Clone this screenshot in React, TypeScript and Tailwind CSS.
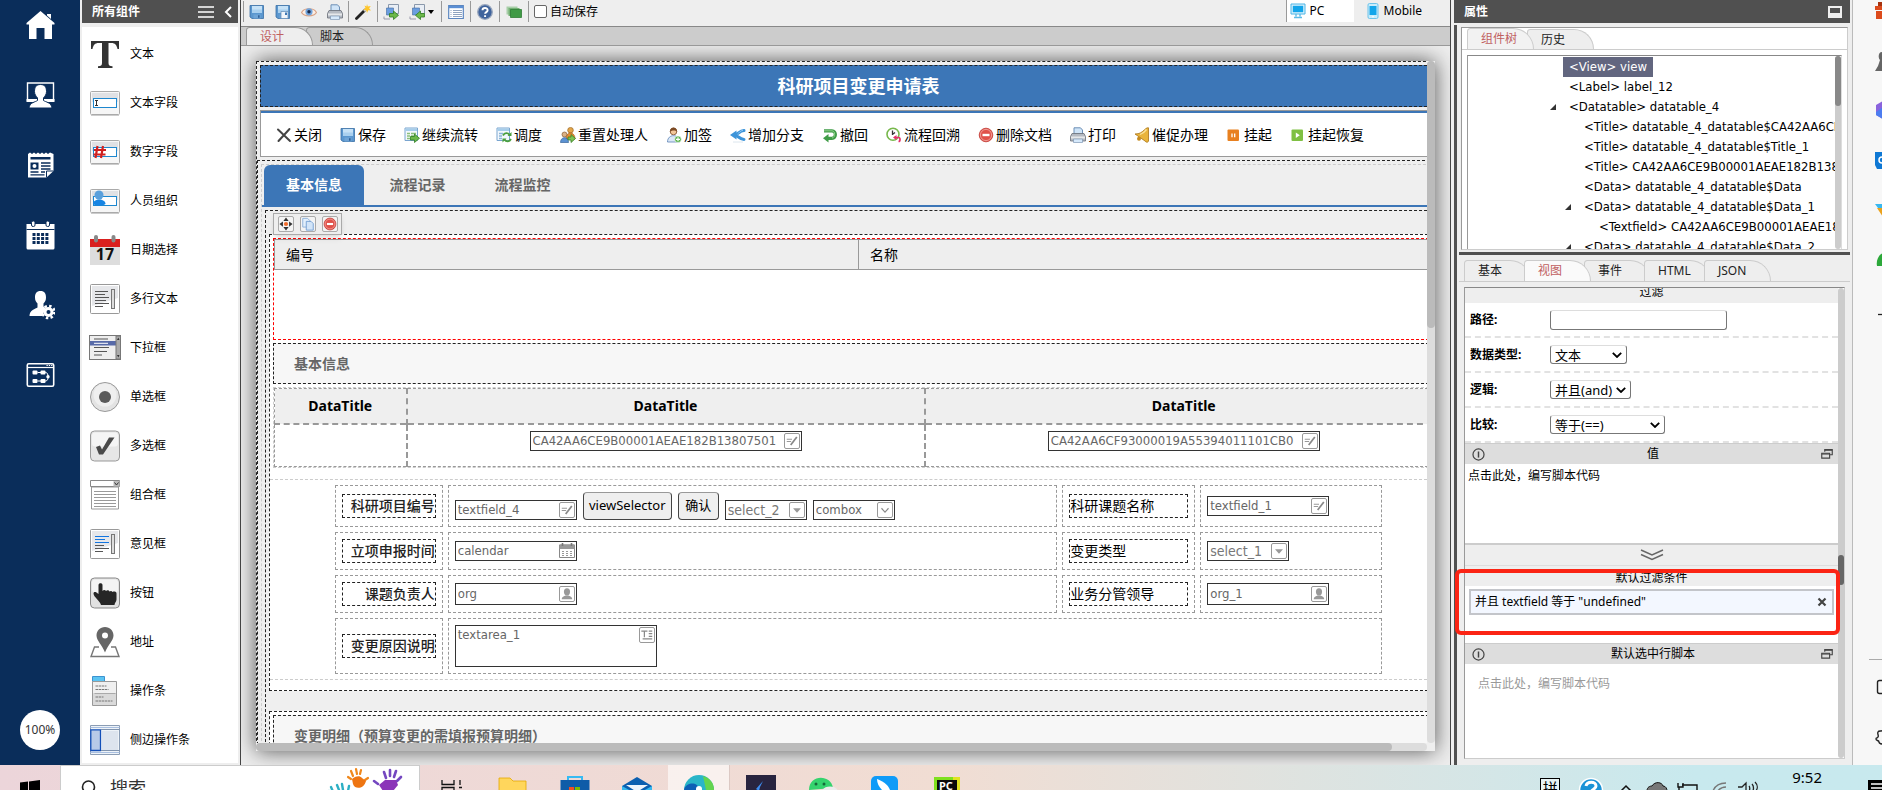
import { useState, type ReactNode } from 'react'

const FONT = "font-['Noto_Sans','Noto_Sans_CJK_SC',sans-serif]"

type IconName = string

/* ── Iconos pequeños 16x16 ── */
function Icon({ name, className = 'size-4 shrink-0' }: { name: IconName; className?: string }) {
  return <svg viewBox="0 0 16 16" className={className} aria-hidden="true">{GLYPHS[name]}</svg>
}

const PRINTER = (
  <>
    <path d="M4 7V.8h6.5L12.500 3v4z" fill="#cfe4f8" stroke="#6d8fb5" />
    <path d="M2 6.500h12l1.500 3v4.500h-15V9.500z" fill="#b5bac2" stroke="#6b7078" strokeWidth=".8" />
    <path d="M1 9.500h14v2H1z" fill="#e6e8ea" />
    <path d="M3.500 12h9v3.500h-9z" fill="#d6e9fb" stroke="#7f98b4" strokeWidth=".7" />
  </>
)

const FLOPPY = (
  <>
    <path d="M1 1.500h13.500v13H3L1 13z" fill="#5b97cf" stroke="#3a6ea5" strokeWidth=".8" />
    <path d="M3 2h10v7H3z" fill="#a9d0ef" />
    <path d="M3 2h10v3.500H3z" fill="#c6e2f7" />
    <path d="M4.500 10.500h7v4h-7z" fill="#6fa4d6" />
    <path d="M9 11.200h1.600v2.600H9z" fill="#2f6199" />
  </>
)

const RED_MINUS = (
  <>
    <circle cx="8" cy="8" r="6.800" fill="#e0524a" stroke="#c23a33" strokeWidth=".8" />
    <circle cx="8" cy="8" r="5.600" fill="none" stroke="#f2a19b" strokeWidth=".9" />
    <path d="M4.500 6.800h7v2.400h-7z" fill="#fff" />
  </>
)

const GREEN_ARROW = <path d="M6.500 9.500h4V7l5 4.300-5 4.200V13h-4z" fill="#6cb84a" stroke="#2f7d22" strokeWidth=".8" />

const GLYPHS: Record<string, ReactNode> = {
  floppy: FLOPPY,
  floppyAs: (
    <>
      {FLOPPY}
      <path d="M6 7.500h7v7H6z" fill="#f1f6fb" stroke="#5d88b5" strokeWidth=".7" />
      <path d="M10 8.500h2V11h-2z" fill="#3f78b4" />
    </>
  ),
  eye: (
    <>
      <path d="M.5 8.500C3 3.500 13 3.500 15.500 8.500 13 13 3 13 .5 8.500z" fill="#fdeee4" stroke="#d9a488" strokeWidth="1.200" />
      <circle cx="8" cy="7.800" r="3.600" fill="#6fa3dc" />
      <circle cx="8" cy="7.800" r="1.700" fill="#1c2b4b" />
    </>
  ),
  printer: PRINTER,
  wand: (
    <>
      <path d="M1.500 14.500L10 6" stroke="#222" strokeWidth="2.800" strokeLinecap="round" />
      <path d="M9 7l2-2" stroke="#ccc" strokeWidth="2.600" />
      <path d="M12 0l.8 2.600L15.800 2l-1.700 2.200L16 6.500l-2.800-.3L12 9l-.7-2.800L8.500 6 10.500 4 9.500 1.500l2 1z" fill="#ffc629" />
    </>
  ),
  exportDoc: (
    <>
      <path d="M5.500.5h10v9h-10z" fill="#e9eef5" stroke="#8a98ab" />
      <path d="M3.500 4h7v7h-7z" fill="#6a9ee0" stroke="#44699e" strokeWidth=".6" />
      <path d="M1 12.500V15h6" fill="none" stroke="#99a" />
      {GREEN_ARROW}
    </>
  ),
  importDoc: (
    <>
      <path d="M5.500.5h10v9h-10z" fill="#e9eef5" stroke="#8a98ab" />
      <path d="M3.500 4h7v7h-7z" fill="#6a9ee0" stroke="#44699e" strokeWidth=".6" />
      <path d="M1 12.500V15h6" fill="none" stroke="#99a" />
      <path d="M15.500 9.500h-4V7l-5 4.300 5 4.200V13h4z" fill="#6cb84a" stroke="#2f7d22" strokeWidth=".8" />
    </>
  ),
  list: (
    <>
      <path d="M.7 1.500h14.600v13H.7z" fill="#fff" stroke="#5b86c0" strokeWidth="1.200" />
      <path d="M1 2h14v2.200H1z" fill="#5b8fd4" />
      <path d="M5 6.500h9M5 8.500h9M5 10.500h9M5 12.500h9M2.500 6.500h1M2.500 8.500h1M2.500 10.500h1M2.500 12.500h1" stroke="#8fa3bf" />
    </>
  ),
  help: (
    <>
      <circle cx="8" cy="8" r="7.300" fill="#3f639c" stroke="#9aa7bd" strokeWidth="1.300" />
      <path d="M5.500 6.300C5.500 3.300 10.600 3.300 10.600 6.200c0 1.900-2.500 1.900-2.500 3.600M8.100 11.200v1.800" fill="none" stroke="#fff" strokeWidth="1.900" />
    </>
  ),
  greenWin: (
    <>
      <path d="M.5 2.500h11v8H.5z" fill="#a8cfa8" />
      <path d="M2.500 4h11v8h-11z" fill="#74b074" />
      <path d="M4.500 5.500h11v8h-11z" fill="#3f9a45" stroke="#2f7d35" strokeWidth=".8" />
    </>
  ),
  pc: (
    <>
      <path d="M1 1h14v10H1z" fill="#d8f1fc" stroke="#4ab4e6" strokeWidth="1" />
      <path d="M2.800 2.800h10.400v6.400H2.800z" fill="#12a5ea" />
      <path d="M6 11v2.500M10 11v2.500M4 14.500h8" stroke="#5cbbe8" strokeWidth="1.400" />
    </>
  ),
  mobile: (
    <>
      <rect x="3" y=".5" width="10" height="15" rx="1.500" fill="#c9ecfb" stroke="#6cc3ea" />
      <path d="M4.500 3h7v9h-7z" fill="#12a5ea" />
      <circle cx="8" cy="13.700" r=".8" fill="#fff" />
    </>
  ),
  close: <path d="M2 2.500L14 14M13.500 2L2.500 14" stroke="#444" strokeWidth="2" strokeLinecap="round" />,
  flow: (
    <>
      <path d="M1 1h12.500v12.500H1z" fill="#f3f8fd" stroke="#7aa5cf" />
      <path d="M1.500 1.500h11.500v2.500H1.500z" fill="#a7cdea" />
      <path d="M3 6.500h3M7 6.500h5M3 9h3M7 9h3M3 11.500h3" stroke="#8cc07a" strokeWidth="1.300" />
      {GREEN_ARROW}
    </>
  ),
  dispatch: (
    <>
      <path d="M1 1h12.500v12.500H1z" fill="#f3f8fd" stroke="#7aa5cf" />
      <path d="M1.500 1.500h11.500v2.500H1.500z" fill="#a7cdea" />
      <path d="M3 6.500h4M3 9h3M3 11.500h3" stroke="#8cb4d8" strokeWidth="1.300" />
      <path d="M7 8.500c1.500-3 5-3 6.500-.5M15 12c-1.500 3-5 3-6.500.5" fill="none" stroke="#4a9f3e" strokeWidth="1.800" />
      <path d="M15.500 5v4h-4zM6.500 15.500v-4h4z" fill="#4a9f3e" />
    </>
  ),
  users: (
    <>
      <circle cx="10.500" cy="3.200" r="2.800" fill="#e3a54a" stroke="#9c6a25" strokeWidth=".7" />
      <path d="M6 12c0-8 9-8 9 0z" fill="#e98d2e" stroke="#a35f17" strokeWidth=".7" />
      <circle cx="4.500" cy="7.500" r="2.500" fill="#dcb184" stroke="#86592f" strokeWidth=".7" />
      <path d="M.5 15.500c0-6.500 8-6.500 8 0z" fill="#5b92d2" stroke="#38659b" strokeWidth=".7" />
      <path d="M8 10h3V7.500l4.500 4-4.500 4V13H8z" fill="#7cc253" stroke="#3a8228" strokeWidth=".8" />
    </>
  ),
  userAdd: (
    <>
      <circle cx="7.500" cy="4.500" r="3.300" fill="#f3c79a" stroke="#7c4a24" strokeWidth=".8" />
      <path d="M4 5c-.5-6 7.500-6 7 0-1.500-1.800-4.500-2-7 0z" fill="#7c4a24" />
      <path d="M1.500 15c0-8.500 12-8.500 12 0z" fill="#dbe8f7" stroke="#5a81b4" strokeWidth=".8" />
      <circle cx="12" cy="12.300" r="3.300" fill="#57b04a" stroke="#fff" strokeWidth=".6" />
      <path d="M12 10.300v4M10 12.300h4" stroke="#fff" strokeWidth="1.200" />
    </>
  ),
  branch: (
    <>
      <path d="M14 3.500C9 3.800 8 8 4 8c4 0 5 4.200 10 4.500" fill="none" stroke="#3d94d9" strokeWidth="3" strokeLinecap="round" />
      <path d="M0 8l6.500-4.500v9z" fill="#3d94d9" />
      <path d="M13 3.300C10 3.800 9 6 7.500 7.200" fill="none" stroke="#8cc6f2" />
      <path d="M3 15h10" stroke="#dce6ee" />
    </>
  ),
  undo: (
    <>
      <path d="M2 3.800h8c4.500 0 4.500 7.500 0 7.500H6" fill="none" stroke="#3f9c47" strokeWidth="3.200" />
      <path d="M2 3.800h8c3.500 0 3.500 7 0 7.200" fill="none" stroke="#8fd08a" strokeWidth="1" />
      <path d="M6.500 7v8.500L1 11.300z" fill="#3f9c47" />
    </>
  ),
  history: (
    <>
      <circle cx="7" cy="7.300" r="6" fill="#fff" stroke="#77b84c" strokeWidth="1.600" />
      <path d="M6.500 3.500v4.500M7 7l2-1.500" fill="none" stroke="#333" strokeWidth="1.300" />
      <path d="M8 10.500h4.500c2 0 2 4 0 4" fill="none" stroke="#e5316b" strokeWidth="1.700" />
      <path d="M7 10.500l3.500-2.500v5z" fill="#e5316b" />
    </>
  ),
  remove: RED_MINUS,
  bell: (
    <>
      <path d="M14.500.8v13.500c-1 1.500-2.500 1-3.500-.3L1 7c3-.2 5-.5 7.500-2.500S12.500.3 14.500.8z" fill="#e9b43c" stroke="#a97417" strokeWidth=".8" />
      <path d="M12.500 2.500c-1.500 2-4 4.200-6.500 5" fill="none" stroke="#fbe29a" strokeWidth="1.300" />
      <circle cx="5" cy="11.800" r="2" fill="#c58a1e" />
    </>
  ),
  pause: (
    <>
      <rect x="1.500" y="2.500" width="11.500" height="11.500" rx="1" fill="#e8801f" />
      <path d="M6 6.500v3.700M8.700 6.500v3.700" stroke="#fff" strokeWidth="1.300" />
    </>
  ),
  play: (
    <>
      <rect x="1.500" y="2.500" width="11.500" height="11.500" rx="1" fill="#7fc043" />
      <path d="M5.800 5.500l4 2.700-4 2.800z" fill="#fff" />
    </>
  ),
  move: (
    <>
      <circle cx="8" cy="8" r="2.400" fill="#f26c2a" />
      <path d="M8 .5l3 4H5zM8 15.500l3-4H5zM.5 8l4-3v6zM15.500 8l-4-3v6z" fill="#333" />
    </>
  ),
  copy: (
    <>
      <path d="M2 1.500h5.500L10 4v7.500H2z" fill="#e3effb" stroke="#86acd8" />
      <path d="M6 5h5.500L14 7.500V15H6z" fill="#d3e5f8" stroke="#6f9bd0" />
    </>
  ),
  edit: (
    <>
      <path d="M2 6h6M2 8.500h5" stroke="#999" strokeWidth="1.200" />
      <path d="M6.500 12.500l7-9" stroke="#888" strokeWidth="2" />
    </>
  ),
  down: <path d="M3.500 6h9L8 11z" fill="#999" />,
  chevron: <path d="M4 6l4 4.500L12 6" fill="none" stroke="#888" strokeWidth="1.300" />,
  person: (
    <>
      <ellipse cx="8" cy="5.500" rx="3.500" ry="4.200" fill="#999" />
      <path d="M2 14c0-3 3-3.500 4.300-4.300h3.400c1.300.8 4.300 1.300 4.300 4.300z" fill="#999" />
    </>
  ),
  textarea: <path d="M1.500 3.500h7M5 3.500v7M10 3.500h4M10 6.500h4M10 9.500h4M3 12.500h11" stroke="#888" strokeWidth="1.400" />,
  date: (
    <>
      <path d="M.5 2h15v12.500h-15z" fill="#fff" stroke="#888" />
      <path d="M.5 1.500h15v4.500h-15z" fill="#999" />
      <path d="M3.500 0v3M12.500 0v3" stroke="#777" strokeWidth="1.600" />
      <path d="M3 8.500h10M3 10.500h10M3 12.500h10" stroke="#999" strokeDasharray="2 2" />
    </>
  ),
  info: (
    <>
      <circle cx="8" cy="8" r="6.800" fill="none" stroke="#444" strokeWidth="1.500" />
      <path d="M8 4.300v7.500" stroke="#444" strokeWidth="1.800" />
    </>
  ),
  restore: (
    <>
      <path d="M5 5V2h10v7h-3" fill="none" stroke="#444" strokeWidth="1.500" />
      <path d="M5 3h10" stroke="#444" strokeWidth="1.500" />
      <path d="M1 7h10.500v6.500H1z" fill="none" stroke="#444" strokeWidth="1.500" />
      <path d="M1 8h10.500" stroke="#444" strokeWidth="1.500" />
    </>
  ),
}

/* ── Barra lateral azul ── */
const RAIL: { label: string; art: ReactNode }[] = [
  {
    label: '首页',
    art: (
      <>
        <path d="M14 0L28 12v1.500h-2.500V28H18V17h-8v11H2.500V13.500H0V12z" fill="#fff" />
        <path d="M20.500 3h4v5l-4-3.500z" fill="#fff" />
      </>
    ),
  },
  {
    label: '门户',
    art: (
      <>
        <path d="M1 2h26v17.500H1z" fill="none" stroke="#fff" strokeWidth="1.400" />
        <path d="M0 18h28v3H0z" fill="#fff" />
        <path d="M14 3.500c4.500 0 6 3 6 7 0 3-1.500 4.500-3 6.500v2.500c2 1.500 8 2 8.500 7.500h-23C3 21.500 9 21 11 19.500V17c-1.500-2-3-3.500-3-6.500 0-4 1.500-7 6-7z" fill="#fff" stroke="#0a2d5a" strokeWidth="1" />
      </>
    ),
  },
  {
    label: '内容',
    art: (
      <>
        <path d="M1.500 3l2-1.500 2 1.500 2-1.500 2 1.500 2-1.500 2 1.500 2-1.500 2 1.500 2-1.500 2 1.500 2-1.500L27 3v17l-7 6.500H1.500z" fill="#fff" />
        <path d="M4 6h20v2.500H4z" fill="#0a2d5a" />
        <path d="M4 11.500h8v7H4z" fill="#0a2d5a" />
        <circle cx="8" cy="15" r="2" fill="#fff" />
        <path d="M14.500 12h9.500M14.500 15h9.500M14.500 18h9.500M4 21h8M14.500 21h4M4 23.800h14" stroke="#0a2d5a" strokeWidth="1.300" />
        <path d="M20 26.500V20h7" fill="none" stroke="#0a2d5a" />
      </>
    ),
  },
  {
    label: '日程',
    art: (
      <>
        <path d="M0 3h28v24a1.500 1.500 0 01-1.500 1.500h-25A1.500 1.500 0 010 27z" fill="#fff" />
        <path d="M0 8.500h28" stroke="#0a2d5a" />
        <rect x="5" y="0" width="3.500" height="5.500" rx="1.500" fill="#fff" stroke="#0a2d5a" />
        <rect x="19.500" y="0" width="3.500" height="5.500" rx="1.500" fill="#fff" stroke="#0a2d5a" />
        <path d="M6 13.500h17M6 17.500h17M6 21.500h17" stroke="#0a2d5a" strokeWidth="2.800" strokeDasharray="3 1.300" />
      </>
    ),
  },
  {
    label: '组织',
    art: (
      <>
        <path d="M14 0c4 0 5.500 2.500 5.500 6.500 0 3-1 4.500-2.500 6v3l2 1.500-3 8H3c0-6 6-7 8-8.500v-4c-1.500-1.500-2.500-3-2.500-6C8.500 2.500 10 0 14 0z" fill="#fff" />
        <circle cx="22" cy="21" r="5" fill="#fff" />
        <circle cx="22" cy="21" r="6" fill="none" stroke="#fff" strokeWidth="2.600" strokeDasharray="2.400 2.300" />
        <circle cx="22" cy="21" r="2" fill="#0a2d5a" />
      </>
    ),
  },
  {
    label: '流程',
    art: (
      <>
        <rect x=".8" y="2.800" width="26.400" height="22.400" rx="1.500" fill="none" stroke="#fff" strokeWidth="1.600" />
        <path d="M1 6.500h26" stroke="#fff" strokeWidth="1.200" />
        <path d="M20 4.500h6" stroke="#fff" strokeWidth="1.200" strokeDasharray="1.300 1" />
        <rect x="6" y="9.500" width="5" height="4" rx="1" fill="#fff" />
        <rect x="14" y="9.500" width="5" height="4" rx="1" fill="#fff" />
        <rect x="6" y="18" width="5" height="4" rx="1" fill="#fff" />
        <rect x="14" y="18" width="5" height="4" rx="1" fill="#fff" />
        <circle cx="21.500" cy="15.800" r="1.700" fill="#fff" />
        <path d="M11 11.500h8c2 0 2.500 2 2.500 4M11 20h8c2 0 2.500-2 2.500-4" fill="none" stroke="#fff" />
      </>
    ),
  },
]

/* ── Paleta de componentes ── */
const BOX = (
  <>
    <rect x=".5" y="3.500" width="29" height="23" rx="1" fill="#f6f6f6" stroke="#aaa" />
    <path d="M2 5h26v9H2z" fill="#e0e1e4" />
    <rect x="3.500" y="10.500" width="23" height="9" fill="#fff" stroke="#1d87cf" />
    <path d="M1 27.500h28" stroke="#ccc" />
  </>
)
const PAGE = (
  <>
    <rect x=".5" y=".5" width="29" height="29" rx="1" fill="#fff" stroke="#999" />
    <path d="M2 2h26v12L2 22z" fill="#e6e7ea" />
    <rect x="21.500" y="5.500" width="3" height="19" fill="#ddd" stroke="#777" />
  </>
)

const PALETTE: { label: string; art: ReactNode }[] = [
  { label: '文本', art: <path d="M1 2h28v8h-1.500c-.8-4-2.500-6-6-6H18.500v20c0 2.500 1 3 4 3.300V29H8v-1.700c3-.3 4-.8 4-3.300V4H8.500c-3.500 0-5.200 2-6 6H1z" fill="#333" /> },
  { label: '文本字段', art: <>{BOX}<path d="M5 12.500h3M6.500 12.500v5M5 17.500h3" stroke="#333" /></> },
  { label: '数字字段', art: <>{BOX}<path d="M7.500 9L5.500 21M13 9l-2 12M4 13h12M3.500 17.500h12" stroke="#cf2020" strokeWidth="2.200" /></> },
  {
    label: '人员组织',
    art: <>{BOX}<circle cx="9" cy="9" r="4.500" fill="#5aa0dc" /><path d="M3 18c0-6 12.500-6 12.500 0-3 2-9.500 2-12.500 0z" fill="#1785e3" /></>,
  },
  {
    label: '日期选择',
    art: (
      <>
        <path d="M0 4h30v26H0z" fill="#ddd" />
        <path d="M0 4h30v8H0z" fill="#d9201f" />
        <rect x="4" y="0" width="4" height="7.500" rx="2" fill="#888" />
        <rect x="21.500" y="0" width="4" height="7.500" rx="2" fill="#888" />
        <text x="15" y="25" textAnchor="middle" className="text-[16px] font-bold" fill="#111">17</text>
      </>
    ),
  },
  { label: '多行文本', art: <>{PAGE}<path d="M5 7.500h13M5 10.500h10M5 13.500h14M5 16.500h11M5 19.500h14M5 22.500h8" stroke="#555" /></> },
  {
    label: '下拉框',
    art: (
      <>
        <rect x="-.5" y="2.500" width="31" height="24" fill="#eee" stroke="#777" />
        <path d="M0 8h26v4.500H0z" fill="#5669a8" />
        <path d="M26 3h4.500v23H26z" fill="#aaa" stroke="#777" />
        <path d="M4 6h14M4 14.500h15M4 18.500h13M4 22h8" stroke="#555" />
        <path d="M4 10.300h14" stroke="#fff" />
        <path d="M27 7l1.300-2.500L29.500 7zM27 22l1.300 2.500L29.500 22z" fill="#333" />
      </>
    ),
  },
  {
    label: '单选框',
    art: (
      <>
        <circle cx="15" cy="15" r="14.500" fill="#e3e3e3" stroke="#999" />
        <circle cx="15" cy="13" r="11.500" fill="#efefef" />
        <circle cx="15" cy="15" r="6" fill="#5a5a5a" />
      </>
    ),
  },
  {
    label: '多选框',
    art: (
      <>
        <rect x=".5" y="0" width="29" height="30" rx="4" fill="#e6e6e6" stroke="#999" />
        <rect x="2" y="1.500" width="26" height="14" rx="3" fill="#f5f5f5" />
        <path d="M6 16l4-1.500 2 4L19 6.500h5.500L13 23.500H9z" fill="#4a4a4a" />
      </>
    ),
  },
  {
    label: '组合框',
    art: (
      <>
        <path d="M1.500 7h27v22h-27z" fill="#fff" stroke="#999" />
        <path d="M.5 .5h29v6H.5z" fill="#fff" stroke="#888" />
        <path d="M23.500 1h6v5.500h-6z" fill="#bbb" />
        <path d="M24.500 2.500l2 2.500 2-2.500" fill="none" stroke="#333" />
        <path d="M4 11.500h22M4 14.500h22M4 17.500h22M4 20.500h22M4 23.500h22M4 26.500h22" stroke="#999" />
      </>
    ),
  },
  {
    label: '意见框',
    art: <>{PAGE}<path d="M5 7.500h14M5 10.500h10M5 13.500h14" stroke="#1275e0" /><path d="M5 16.500h9M5 19.500h14M5 22.500h8" stroke="#555" /></>,
  },
  {
    label: '按钮',
    art: (
      <>
        <rect x=".5" y="0" width="29" height="30" rx="4" fill="#e2e2e2" stroke="#888" />
        <rect x="2" y="1.500" width="26" height="13" rx="3" fill="#f4f4f4" />
        <path d="M8.500 7c0-2.500 4-2.500 4 0v6c1-1.500 3-1.200 3.500 0 1-1.200 3-.8 3.500.5 1-1 2.500-.7 3 .5 1.500-1 4-.5 4 1.500v6c0 2.500-2 3-2 5.500H11c-1-4-7.500-8-7.500-11.500 0-2 2-2.500 5 .5z" fill="#262626" />
      </>
    ),
  },
  {
    label: '地址',
    art: (
      <>
        <path d="M9 20H4.500L1 29.500h28L25.500 20H21" fill="none" stroke="#777" strokeWidth="1.400" />
        <path d="M15 0c5 0 8.500 4 8.500 8.500 0 5-5.500 9-8.500 17-3-8-8.500-12-8.500-17C6.500 4 10 0 15 0z" fill="#666" />
        <circle cx="15" cy="8.500" r="3" fill="#fff" />
      </>
    ),
  },
  {
    label: '操作条',
    art: (
      <>
        <path d="M2.500.5h12v5h-12z" fill="#5cc4f2" stroke="#3c93d0" />
        <path d="M2.500 5.500h24v24h-24z" fill="#f0f0f0" stroke="#999" />
        <path d="M3 17h23v12H3z" fill="#dadada" />
        <path d="M4.500 17.500h21" stroke="#aaa" />
        <path d="M5.500 10h11M5.500 13.500h13M5.500 21h8M5.500 25h17" stroke="#777" strokeDasharray="2.500 .6" />
      </>
    ),
  },
  {
    label: '侧边操作条',
    art: (
      <>
        <path d="M.5 .5h29v29H.5z" fill="#eef3f8" stroke="#8b9db5" />
        <path d="M.5 2.500h29M.5 27.500h29" stroke="#a9bfe0" />
        <path d="M12 6h16v19H12z" fill="#dde4ee" />
        <path d="M.8 4.800h9.700v20.700H.8z" fill="#b7cae8" stroke="#1450b8" strokeWidth="1.300" />
        <path d="M11 4.500h18.500M11 25.500h18.500" stroke="#7f93ae" />
      </>
    ),
  },
]

const ACTIONS = [
  ['close', '关闭'], ['floppy', '保存'], ['flow', '继续流转'], ['dispatch', '调度'], ['users', '重置处理人'],
  ['userAdd', '加签'], ['branch', '增加分支'], ['undo', '撤回'], ['history', '流程回溯'], ['remove', '删除文档'],
  ['printer', '打印'], ['bell', '催促办理'], ['pause', '挂起'], ['play', '挂起恢复'],
]

const TREE = [
  { depth: 0, text: '<View> view', selected: true },
  { depth: 0, text: '<Label> label_12' },
  { depth: 0, text: '<Datatable> datatable_4', open: true },
  { depth: 1, text: '<Title> datatable_4_datatable$CA42AA6CE9B' },
  { depth: 1, text: '<Title> datatable_4_datatable$Title_1' },
  { depth: 1, text: '<Title> CA42AA6CE9B00001AEAE182B13807501' },
  { depth: 1, text: '<Data> datatable_4_datatable$Data' },
  { depth: 1, text: '<Data> datatable_4_datatable$Data_1', open: true },
  { depth: 2, text: '<Textfield> CA42AA6CE9B00001AEAE182B1' },
  { depth: 1, text: '<Data> datatable_4_datatable$Data_2', open: true },
]

const INDENT = ['pl-[80px]', 'pl-[95px]', 'pl-[110px]']

function Separator() {
  return <span className="h-[21px] w-px bg-[#999]" />
}

function ToolButton({ name, label }: { name: IconName; label: string }) {
  return (
    <button type="button" aria-label={label} className="flex items-center">
      <Icon name={name} />
    </button>
  )
}

/* Campo de formulario con icono a la derecha */
function Field({ value, icon, width, tall = false }: { value: string; icon: IconName; width: string; tall?: boolean }) {
  return (
    <label className={`flex items-center border border-[#333] bg-white px-px ${tall ? 'h-[22px]' : 'h-5'} ${width}`}>
      <input aria-label={value} defaultValue={value} className="w-0 min-w-0 flex-1 px-px font-['DejaVu_Sans_Condensed','Noto_Sans',sans-serif] text-[13px] leading-4 text-[#666] outline-none" />
      {icon === 'date' ? (
        <Icon name="date" />
      ) : (
        <span className="flex h-4 w-4 shrink-0 items-center justify-center rounded-xs border border-[#999]"><Icon name={icon} className="size-[14px]" /></span>
      )}
    </label>
  )
}

function SelectField({ value }: { value: string }) {
  return (
    <label className="flex h-5 w-[82px] items-center border border-[#333] bg-white px-px">
      <select aria-label={value} className="w-0 min-w-0 flex-1 appearance-none px-px font-['DejaVu_Sans_Condensed','Noto_Sans',sans-serif] text-sm leading-4 text-[#777] outline-none">
        <option>{value}</option>
      </select>
      <span className="flex size-4 shrink-0 items-center justify-center rounded-xs border border-[#999]"><Icon name="down" className="size-[14px]" /></span>
    </label>
  )
}

function Cell({ children, className = '' }: { children?: ReactNode; className?: string }) {
  return <div className={`flex min-w-0 items-center gap-[6px] border border-dashed border-[#999] px-[6px] ${className}`}>{children}</div>
}

function Caption({ children, strong = false }: { children: ReactNode; strong?: boolean }) {
  return (
    <div className={`h-6 w-full overflow-hidden border border-dashed border-[#222] text-sm leading-[22px] whitespace-nowrap ${strong ? 'text-right font-medium text-[#222]' : 'text-black'}`}>
      {children}
    </div>
  )
}

function DesignerForm() {
  return (
    <div className="w-[calc(100%+34px)] border border-dashed border-[#222]">
      <div className="mx-[3px] mt-[3px] flex h-[42px] items-center justify-center border border-dashed border-[#222] bg-[#3c76b7] text-lg font-bold text-white">
        科研项目变更申请表
      </div>
      <div className="mx-[3px] mt-[3px] border border-[#999] bg-white">
        <div className="flex h-[45px] items-center gap-[18px] border-t-2 border-[#3c76b7] pl-[15px]">
          {ACTIONS.map(([icon, label]) => (
            <button key={label} type="button" className="flex items-center gap-[2px] text-sm whitespace-nowrap text-black">
              <Icon name={icon} />{label}
            </button>
          ))}
        </div>
      </div>

      <div className="mt-[3px] border border-dashed border-[#222] p-[3px]">
        <div className="border border-dashed border-[#ccc]">
          <div className="flex h-[42px] items-stretch gap-[2px] border-b-2 border-[#3c76b7] pl-[2px] text-sm font-bold">
            <button type="button" className="w-[100px] rounded-t-md bg-[#3c76b7] text-white">基本信息</button>
            <button type="button" className="w-[103px] text-[#666]">流程记录</button>
            <button type="button" className="w-[103px] text-[#666]">流程监控</button>
          </div>
          <div className="p-[3px]">
            <div className="relative border border-dashed border-[#222] px-[3px] pt-[23px]">
              {/* Mini barra del elemento seleccionado */}
              <div className="absolute top-[2px] left-[7px] z-10 flex h-[22px] w-[69px] items-center justify-center gap-[6px] border border-[#aaa] bg-[#eee] shadow-md">
                {[['move', '移动'], ['copy', '复制'], ['remove', '删除']].map(([icon, label]) => (
                  <button key={icon} type="button" aria-label={label} className="flex size-4 items-center justify-center rounded-xs border border-[#aaa] bg-[#f4f4f4]">
                    <Icon name={icon} className="size-[14px]" />
                  </button>
                ))}
              </div>

              <div className="border border-dashed border-[#222] bg-white px-[3px] pt-[3px] pb-[10px]">
                <div className="h-[102px] border border-dashed border-[#f00]">
                  <table className="w-full table-fixed border-collapse border border-[#999] bg-[#eee] text-left text-sm">
                    <thead>
                      <tr className="h-[30px]">
                        <th className="border-r border-[#999] pl-[11px] font-normal">编号</th>
                        <th className="pl-[11px] font-normal">名称</th>
                      </tr>
                    </thead>
                  </table>
                </div>

                <div className="mt-[3px] flex h-[41px] items-center border border-dashed border-[#222] bg-[#f7f7f7] pl-5 text-sm font-bold text-[#666]">
                  基本信息
                </div>

                <div className="mt-[3px] border border-dashed border-[#ccc]">
                  <table className="w-full table-fixed border-collapse border border-dashed border-[#999]">
                    <thead>
                      <tr className="h-[35px] border-b-2 border-dashed border-[#999] bg-[#efefef] text-sm">
                        <th className="w-[132px] border-r-2 border-dashed border-[#999]">DataTitle</th>
                        <th className="border-r-2 border-dashed border-[#999]">DataTitle</th>
                        <th>DataTitle</th>
                      </tr>
                    </thead>
                    <tbody>
                      <tr className="h-[43px]">
                        <td className="border-r-2 border-dashed border-[#999]" />
                        <td className="border-r-2 border-dashed border-[#999] pt-[6px] align-top">
                          <div className="flex justify-center"><Field value="CA42AA6CE9B00001AEAE182B13807501" icon="edit" width="w-[272px]" /></div>
                        </td>
                        <td className="pt-[6px] align-top">
                          <div className="flex justify-center"><Field value="CA42AA6CF93000019A55394011101CB0" icon="edit" width="w-[272px]" /></div>
                        </td>
                      </tr>
                    </tbody>
                  </table>
                </div>

                <div className="-mx-[3px] mt-[11px] border-y border-dashed border-[#ccc] py-[5px]">
                  <div className="mx-auto grid w-[89%] grid-cols-[108px_1fr_133px_182px] grid-rows-[42px_38px_38px_56px] gap-[5px]">
                    <Cell><Caption strong>科研项目编号</Caption></Cell>
                    <Cell className="items-end pb-[6px]">
                      <Field value="textfield_4" icon="edit" width="w-[122px]" />
                      <button type="button" className="h-7 w-[89px] rounded border border-[#444] border-t-[#999] bg-[#efefef] text-[13px]">viewSelector</button>
                      <button type="button" className="h-7 w-[41px] rounded border border-[#444] border-t-[#999] bg-[#efefef] text-[13px]">确认</button>
                      <SelectField value="select_2" />
                      <Field value="combox" icon="chevron" width="w-[82px]" />
                    </Cell>
                    <Cell><Caption>科研课题名称</Caption></Cell>
                    <Cell><Field value="textfield_1" icon="edit" width="w-[122px]" /></Cell>

                    <Cell><Caption strong>立项申报时间</Caption></Cell>
                    <Cell><Field value="calendar" icon="date" width="w-[122px]" /></Cell>
                    <Cell><Caption>变更类型</Caption></Cell>
                    <Cell><SelectField value="select_1" /></Cell>

                    <Cell><Caption strong>课题负责人</Caption></Cell>
                    <Cell><Field value="org" icon="person" width="w-[122px]" tall /></Cell>
                    <Cell><Caption>业务分管领导</Caption></Cell>
                    <Cell><Field value="org_1" icon="person" width="w-[122px]" tall /></Cell>

                    <Cell><Caption strong>变更原因说明</Caption></Cell>
                    <Cell className="col-span-3">
                      <label className="flex h-[42px] w-[202px] items-start border border-[#333] bg-white p-px">
                        <textarea aria-label="textarea_1" defaultValue="textarea_1" className="h-full w-0 flex-1 resize-none px-px font-['DejaVu_Sans_Condensed','Noto_Sans',sans-serif] text-[13px] leading-4 text-[#666] outline-none" />
                        <span className="flex size-4 items-center justify-center rounded-xs border border-[#999]"><Icon name="textarea" className="size-[14px]" /></span>
                      </label>
                    </Cell>
                  </div>
                </div>
              </div>

              <div className="mt-5 border border-dashed border-[#222] bg-white p-[3px]">
                <div className="flex h-[42px] items-center border border-dashed border-[#222] bg-[#f7f7f7] pl-5 text-sm font-bold text-[#666]">
                  变更明细（预算变更的需填报预算明细）
                </div>
              </div>
            </div>
          </div>
        </div>
      </div>
    </div>
  )
}

function ScriptHeader({ children }: { children: ReactNode }) {
  return (
    <div className="flex h-[21px] items-center justify-between border-t border-[#ccc] bg-[#ddd] pr-[5px] pl-[7px]">
      <Icon name="info" className="size-[13px]" />
      <span>{children}</span>
      <Icon name="restore" className="size-3" />
    </div>
  )
}

function PropertyRow({ id, label, children }: { id: string; label: string; children: ReactNode }) {
  return (
    <div className="flex h-[35px] items-center border-b-2 border-dashed border-[#e2e2e2] pl-[5px]">
      <label htmlFor={id} className="w-20 font-bold">{label}</label>
      {children}
    </div>
  )
}

function PropertySelect({ id, options, width }: { id: string; options: string[]; width: string }) {
  return (
    <span className={`relative flex h-[19px] items-center rounded-[3px] border border-[#777] border-t-[#ddd] bg-white ${width}`}>
      <select id={id} className="h-full w-full appearance-none pl-1 text-[13px] leading-4 outline-none">
        {options.map(o => <option key={o}>{o}</option>)}
      </select>
      <svg viewBox="0 0 10 6" className="pointer-events-none absolute right-1 h-[6px] w-[10px]"><path d="M.8.8L5 5 9.200.8" fill="none" stroke="#000" strokeWidth="1.800" /></svg>
    </span>
  )
}

function PropertiesPanel() {
  const [tab, setTab] = useState('视图')

  return (
    <aside className="flex w-[396px] shrink-0 flex-col text-xs">
      <header className="flex h-[23px] shrink-0 items-center justify-between bg-[#505050] pr-2 pl-[10px] font-bold text-white">
        属性
        <button type="button" aria-label="最小化" className="h-3 w-[14px] border-2 border-b-[5px] border-[#eee]" />
      </header>
      <div className="mt-[2px] flex min-h-0 flex-1 flex-col border-l-[3px] border-[#505050] pl-[2px]">
        {/* Árbol */}
        <section className="mt-[2px] mr-[2px] ml-[2px] flex h-[223px] shrink-0 flex-col border border-[#ccc] border-t-[#999] border-l-[#999] bg-white">
          <div className="flex h-[22px] shrink-0 items-end border-b border-[#ccc] pl-[5px]">
            <button type="button" className="relative z-10 h-[21px] w-[67px] rounded-tl-sm rounded-tr-[24px] border border-b-0 border-[#ccc] bg-[#f2f2f2] pl-[13px] text-left text-[#c0605f]">组件树</button>
            <button type="button" className="-ml-[7px] h-5 w-[67px] rounded-tl-sm rounded-tr-[24px] border border-b-0 border-[#ccc] bg-[#eee] pl-[13px] text-left text-[#222]">历史</button>
          </div>
          <div className="mx-[5px] mt-[5px] flex min-h-0 flex-1 border border-b-0 border-[#ddd] border-t-[#888] border-l-[#999]">
            <ul className="min-w-0 flex-1 overflow-hidden pt-px font-['DejaVu_Sans_Condensed','Noto_Sans',sans-serif] text-[13px]">
              {TREE.map(node => (
                <li key={node.text} className={`relative flex h-5 items-center whitespace-nowrap ${INDENT[node.depth]}`}>
                  <span className="flex w-[15px] shrink-0 pl-[2px]">
                    {node.open && <svg viewBox="0 0 6 6" className="size-[6px]"><path d="M6 0v6H0z" fill="#333" /></svg>}
                  </span>
                  <span className={node.selected ? 'bg-[#62667f] px-[6px] leading-5 text-white' : 'px-[6px] text-black'}>{node.text}</span>
                </li>
              ))}
            </ul>
            <div className="w-[6px] rounded-full bg-[#ccc]"><div className="h-[50px] rounded-full bg-[#888]" /></div>
          </div>
        </section>
        <div className="mt-[2px] h-[3px] shrink-0 bg-[#505050]" />

        {/* Propiedades */}
        <div className="mt-[5px] flex h-[22px] shrink-0 items-end border-b border-[#ccc] pl-[5px]">
          {['基本', '视图', '事件', 'HTML', 'JSON'].map(t => (
            <button
              key={t}
              type="button"
              onClick={() => setTab(t)}
              className={`-mr-[7px] h-[21px] w-[67px] rounded-tl-sm rounded-tr-[24px] border border-b-0 border-[#ccc] pl-[13px] text-left ${t === tab ? 'relative z-10 bg-[#fafafa] text-[#c0605f]' : 'bg-[#eee] text-[#222]'}`}
            >
              {t}
            </button>
          ))}
        </div>
        <section className="relative mt-[5px] mr-[5px] mb-[6px] ml-[5px] flex min-h-0 flex-1 border border-[#ccc] border-t-[#888] border-l-[#999] bg-white">
          <div className="flex min-w-0 flex-1 flex-col">
            <div className="h-[15px] overflow-hidden bg-[#eee] text-center"><div className="-mt-[4px] leading-4">过滤</div></div>
            <PropertyRow id="path" label="路径:">
              <input id="path" className="h-5 w-[177px] rounded-[3px] border border-[#777] border-t-[#ddd] px-1 outline-none" />
            </PropertyRow>
            <PropertyRow id="type" label="数据类型:"><PropertySelect id="type" options={['文本', '数字', '日期']} width="w-[77px]" /></PropertyRow>
            <PropertyRow id="logic" label="逻辑:"><PropertySelect id="logic" options={['并且(and)', '或者(or)']} width="w-[81px]" /></PropertyRow>
            <PropertyRow id="compare" label="比较:"><PropertySelect id="compare" options={['等于(==)', '不等于(!=)']} width="w-[115px]" /></PropertyRow>
            <ScriptHeader>值</ScriptHeader>
            <div className="h-[79px] px-[3px] pt-1">点击此处，编写脚本代码</div>
            <button type="button" aria-label="展开" className="flex h-[23px] items-center justify-center border-t-2 border-b border-[#ccc] border-b-[#ddd] bg-[#eee]">
              <svg viewBox="0 0 24 12" className="h-3 w-6"><path d="M1 1l11 5L23 1M1 5.500l11 5 11-5" fill="none" stroke="#666" strokeWidth="1.500" /></svg>
            </button>
            <div className="h-[20px] bg-[#eee] pt-[4px] text-center leading-4">默认过滤条件</div>
            <div className="mx-1 mt-[3px] flex h-[26px] items-center justify-between border-2 border-[#c3c5ca] bg-[#f3f7ff] pr-1 pl-1">
              <span>并且 textfield 等于 "undefined"</span>
              <button type="button" aria-label="删除条件" className="size-3">
                <svg viewBox="0 0 12 12"><path d="M2.500 2.500l7 7M9.500 2.500l-7 7" stroke="#444" strokeWidth="2.200" /></svg>
              </button>
            </div>
            <div className="h-[28px]" />
            <ScriptHeader>默认选中行脚本</ScriptHeader>
            <div className="px-[13px] pt-3 text-[#999]">点击此处，编写脚本代码</div>
          </div>
          <div className="w-[6px] rounded-full bg-[#ccc] pt-[267px]"><div className="h-[30px] rounded-full bg-[#666]" /></div>
          {/* Marco rojo de aviso */}
          <div className="pointer-events-none absolute top-[281px] right-[4px] -left-[10px] h-[66px] rounded-md border-4 border-[#fb2414]" />
        </section>
      </div>
    </aside>
  )
}

function Taskbar() {
  return (
    <footer className="flex h-[25px] shrink-0 items-start overflow-hidden bg-linear-to-r from-[#ecd5da] via-[#f1ddd3] to-[#c8e9ee] to-90%">
      <button type="button" aria-label="开始" className="w-[60px] shrink-0">
        <svg viewBox="0 0 60 25" className="h-[25px] w-[60px]"><path d="M20 17.500l8-1V25h-8zM29 16.400L40 15v10H29z" fill="#000" /></svg>
      </button>
      <div className="flex h-[34px] w-[360px] shrink-0 items-start border border-[#ccc] bg-white pl-5">
        <svg viewBox="0 0 16 20" className="mt-[13px] h-5 w-4"><circle cx="7.500" cy="8" r="6" fill="none" stroke="#222" strokeWidth="1.600" /></svg>
        <input aria-label="搜索" placeholder="搜索" className="mt-[10px] ml-[13px] w-[180px] text-[18px] leading-6 outline-none placeholder:text-[#333]" />
        <svg viewBox="0 0 75 25" className="mr-4 ml-auto h-[25px] w-[75px]" fill="none" strokeLinecap="round">
          <path d="M6 28l-3-7M11 24l-2-5M15 24l-1-6M20 25l1-5M4 28l-3-3" stroke="#2cafc4" strokeWidth="2.400" />
          <path d="M23 13l-3-2M25 10L23 5M29 8l-1-5M32 8l1-4M37 14l3-2" stroke="#f0881c" strokeWidth="2.200" />
          <path d="M24 13c3-3 8-4 10-1l4 3c-2 8-11 9-13 3z" fill="#ee7512" />
          <path d="M50 18l-4-3M58 12l-2-6M62 10V4M66 11l2-6M69 15l4-4" stroke="#7447c0" strokeWidth="2.600" />
          <path d="M51 19l6-5h11l2 5-5 6H55z" fill="#8b34b8" />
        </svg>
      </div>
      {[
        <path key="a" d="M7 15v4.500h12V15M7 25v-2.500h12V25M25 15v5M24 22.500h3" stroke="#111" strokeWidth="1.300" fill="none" />,
        <path key="b" d="M2 13h11l3 3h13v10H2z" fill="#ffd65c" stroke="#e5a800" strokeWidth=".8" />,
        <g key="c"><path d="M9 17v-5h14v5" fill="none" stroke="#37baf2" strokeWidth="2" /><path d="M1.500 15h29v12h-29z" fill="#0e5ca8" /><path d="M10 22h5v4h-5z" fill="#f25022" /><path d="M16 22h5v4h-5z" fill="#7fba00" /></g>,
        <g key="d"><path d="M1 21l15-9 15 9v5H1z" fill="#0b5fb0" /><path d="M5 20h22L16 27z" fill="#eef4fb" /><path d="M1 21l9 5H1zM31 21l-9 5h9z" fill="#35b7ee" /></g>,
        <g key="e"><path d="M1 25a15 15 0 0130 0z" fill="#2ab5c8" /><path d="M20 11c7 2 11 7 11 14h-8z" fill="#63d44e" /><path d="M1 25c1-7 13-10 16 0z" fill="#0e5fb5" /><circle cx="16" cy="24" r="3" fill="#fff" /></g>,
        <g key="f"><path d="M1 10h30v15H1z" fill="#28243f" /><path d="M18 16l-7 8 3 2 1-4z" fill="#3d8df0" /></g>,
        <g key="g"><path d="M2 25c0-16 22-16 24-2z" fill="#35d36e" /><circle cx="9" cy="19" r="1.500" fill="#15693a" /><circle cx="17" cy="19" r="1.500" fill="#15693a" /><path d="M15 26c2-6 14-6 16 0z" fill="#ececec" /></g>,
        <g key="h"><rect x="2" y="11" width="27" height="20" rx="5" fill="#0f9bf8" /><path d="M8 14c5 2 11 5 13 11H13C10 22 8 18 8 14z" fill="#fff" /></g>,
        <g key="i"><path d="M3 12h26v14H3z" fill="#7fe01e" /><path d="M22 12h7v14h-7z" fill="#e0e420" /><path d="M6 15h20v11H6z" fill="#0b0b0b" /><text x="8" y="25" className="text-[11px] font-bold" fill="#fff">PC</text></g>,
      ].map((art, i) => (
        <button key={i} type="button" aria-label={`应用 ${i + 1}`} className={`flex h-[25px] w-[62px] shrink-0 justify-center ${i === 4 ? 'border-r border-[#dcc9c4] bg-white/60' : ''}`}>
          <svg viewBox="0 0 32 25" className="h-[25px] w-8">{art}</svg>
        </button>
      ))}
      <div className="ml-auto flex shrink-0 items-start">
        <span className="mt-[13px] size-5 border border-black bg-white/50 text-center text-[15px] leading-[18px]">拼</span>
        <svg viewBox="0 0 180 25" className="ml-[18px] h-[25px] w-[180px]" fill="none">
          <circle cx="13" cy="25" r="11.500" fill="#1b93d6" stroke="#fff" strokeWidth="1.500" />
          <path d="M8 21c1-5 10-5 10 0 0 3-4 3-5 6" stroke="#fff" strokeWidth="3" />
          <path d="M43 26l5-5 5 5" stroke="#111" strokeWidth="1.500" />
          <path d="M69 26c0-4 3-5 5-5 3-5 10-4 11 0 3 0 4 3 4 5z" fill="#777" stroke="#111" />
          <path d="M104 20h15v6h-15M100 18v4h5v-4M101 22v4" stroke="#111" strokeWidth="1.400" />
          <path d="M135 26c2-5 7-8 13-8M139 27c2-3 5-5 9-5" stroke="#777" strokeWidth="1.400" />
          <path d="M160 22h4l4-4v9M171 21c1 1 1 4 0 5M174 19c2 2 2 6 0 8M177 17c3 3 3 7 0 10" stroke="#222" strokeWidth="1.300" />
        </svg>
        <time className="mt-[2px] ml-[34px] text-[15px] leading-5 text-black">9:52</time>
        <svg viewBox="0 0 14 10" className="mt-[15px] ml-[46px] h-[10px] w-[14px]"><path d="M0 0h14v10H0z" fill="#000" /><path d="M3 4h11M3 8h11" stroke="#fff" strokeWidth="1.300" /></svg>
      </div>
    </footer>
  )
}

export default function App() {
  return (
    <div className={`flex h-screen flex-col overflow-hidden bg-[#eee] text-xs text-black ${FONT}`}>
      <div className="flex min-h-0 flex-1">
        <nav className="flex w-20 shrink-0 flex-col items-center justify-between bg-[#0a2d5a] pt-[11px] pb-[15px]">
          <div className="flex flex-col gap-[41px]">
            {RAIL.map(r => (
              <a key={r.label} href="#" aria-label={r.label} className="block size-[29px]">
                <svg viewBox="0 0 28 29" className="size-[29px]">{r.art}</svg>
              </a>
            ))}
          </div>
          <span className="flex size-10 items-center justify-center rounded-full bg-white text-[#333]">100%</span>
        </nav>

        <aside className="flex w-[161px] shrink-0 flex-col border-r border-[#444] px-[2px] pb-[2px]">
          <header className="flex h-[23px] shrink-0 items-center bg-[#505050] pr-[6px] pl-[10px] font-bold text-white">
            <span className="flex-1">所有组件</span>
            <button type="button" aria-label="菜单"><svg viewBox="0 0 16 12" className="h-3 w-4"><path d="M0 1h16M0 6h16M0 11h16" stroke="#fff" strokeWidth="1.600" /></svg></button>
            <button type="button" aria-label="折叠" className="ml-[10px]"><svg viewBox="0 0 8 12" className="h-3 w-2"><path d="M7 1L2 6l5 5" fill="none" stroke="#fff" strokeWidth="2" /></svg></button>
          </header>
          <ul className="mt-1 min-h-0 flex-1 overflow-hidden bg-white pt-[2px]">
            {PALETTE.map(p => (
              <li key={p.label} className="flex h-[49px] items-center gap-[10px] pl-2">
                <svg viewBox="0 0 30 30" className="size-[30px] overflow-visible">{p.art}</svg>
                {p.label}
              </li>
            ))}
          </ul>
        </aside>

        <main className="flex min-w-0 flex-1 flex-col">
          <div className="flex h-[27px] shrink-0 items-start border-b border-[#888] pl-[2px]">
            <div className="flex items-center pt-px">
              <Separator />
              <div className="flex items-center gap-[10px] px-[5px]">
                <ToolButton name="floppy" label="保存" />
                <ToolButton name="floppyAs" label="另存" />
                <ToolButton name="eye" label="预览" />
                <ToolButton name="printer" label="打印" />
              </div>
              <Separator />
              <div className="px-[6px]"><ToolButton name="wand" label="向导" /></div>
              <Separator />
              <div className="flex items-center gap-[10px] pr-[7px] pl-[5px]">
                <ToolButton name="exportDoc" label="导出" />
                <button type="button" aria-label="导入" className="flex items-center gap-[3px]">
                  <Icon name="importDoc" />
                  <svg viewBox="0 0 6 4" className="h-1 w-[6px]"><path d="M0 0h6L3 4z" /></svg>
                </button>
              </div>
              <Separator />
              <div className="px-[6px]"><ToolButton name="list" label="列表" /></div>
              <Separator />
              <div className="px-[6px]"><ToolButton name="help" label="帮助" /></div>
              <Separator />
              <div className="px-[6px]"><ToolButton name="greenWin" label="窗口" /></div>
              <Separator />
              <label className="flex items-center gap-[3px] pl-[5px]">
                <input type="checkbox" className="size-[13px] appearance-none rounded-xs border border-[#666] bg-white" />
                自动保存
              </label>
            </div>
            <div className="mr-[28px] ml-auto flex items-stretch">
              <button type="button" className="flex h-[22px] w-[68px] items-center gap-1 border-l border-[#999] bg-white pl-[3px]"><Icon name="pc" />PC</button>
              <button type="button" className="ml-[10px] flex h-[22px] items-center gap-[3px] pl-px"><Icon name="mobile" />Mobile</button>
            </div>
          </div>
          <div className="flex h-[19px] shrink-0 items-end border-b border-[#999] bg-[#ccc] pl-[5px]">
            <button type="button" className="relative z-10 h-[18px] w-[67px] rounded-tl-sm rounded-tr-[20px] border border-b-0 border-[#999] bg-[#eee] pl-[13px] text-left leading-4 text-[#c0605f]">设计</button>
            <button type="button" className="-ml-[7px] h-[18px] w-[67px] rounded-tl-sm rounded-tr-[20px] border border-b-0 border-[#999] bg-[#ccc] pl-[13px] text-left leading-4 text-[#222]">脚本</button>
          </div>
          <div className="flex min-h-0 flex-1 flex-col overflow-hidden px-[15px] pt-[15px] pb-[14px]">
            <div className="flex min-h-0 flex-1 flex-col bg-[#efefef] shadow-[0_0_20px_#555]">
              <div className="flex min-h-0 flex-1">
                <div className="min-w-0 flex-1 overflow-hidden"><DesignerForm /></div>
                <div className="w-2 rounded-full bg-[#ddd]"><div className="h-[267px] rounded-full bg-[#bbb]" /></div>
              </div>
              <div className="mr-2 h-2 rounded-full bg-[#ddd]"><div className="h-2 w-[97%] rounded-full bg-[#bbb]" /></div>
            </div>
          </div>
        </main>

        <div className="w-1 shrink-0 border-l border-[#444] bg-[#eee]" />
        <PropertiesPanel />

        {/* Barra lateral del navegador */}
        <div className="ml-[2px] w-[30px] shrink-0 border-l border-[#bbb] bg-[#f7f7f7]">
          <svg viewBox="0 0 29 765" className="h-[765px] w-[29px]">
            <path d="M22 6h8v4h-8zM23 11h7v8h-7z" fill="#dc4b1c" />
            <path d="M25 2h5v4h-5z" fill="#a8340f" />
            <path d="M29 52c-4 0-4 6-2 8l-2 6-3 5h8z" fill="#666" />
            <path d="M30 101l-7 4v10l7 4z" fill="#8a63dd" />
            <path d="M23 112l7-5v12l-7-4z" fill="#4d7df0" />
            <path d="M22 152h8v17h-6l-2-4z" fill="#0f78d4" />
            <circle cx="29" cy="160" r="3" fill="none" stroke="#fff" strokeWidth="1.500" />
            <path d="M22 204h8v4h-5z" fill="#38b8f0" />
            <path d="M24 208h6v9z" fill="#eba21c" />
            <path d="M30 253c-5 2-7 8-6 13h6z" fill="#2ca83a" />
            <path d="M25 314.500h5" stroke="#222" strokeWidth="1.300" />
            <path d="M16 659.500h14" stroke="#aaa" />
            <path d="M30 680.500h-3.500a2 2 0 00-2 2v9a2 2 0 002 2H30" fill="none" stroke="#222" strokeWidth="1.400" />
            <path d="M30 730c-2 2-4 0-5 2s1 3 0 5-2 0-2 2 3 1 3 3 2 2 4 2" fill="none" stroke="#222" strokeWidth="1.400" />
          </svg>
        </div>
      </div>
      <Taskbar />
    </div>
  )
}
